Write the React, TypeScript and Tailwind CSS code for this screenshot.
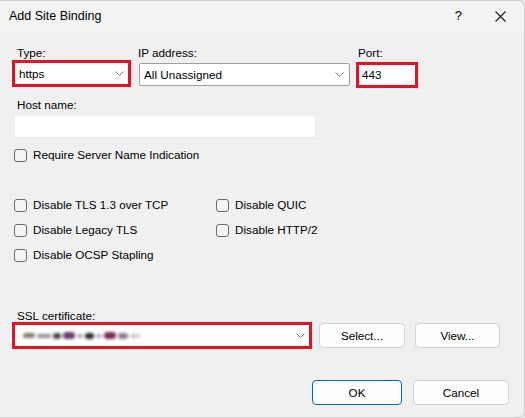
import React from "react";

const font = { fontFamily: '"Liberation Sans", Arial, sans-serif' };

function Chevron() {
  return (
    <svg width="9" height="5" viewBox="0 0 9 5" className="shrink-0">
      <path d="M0.5 0.5 L4.5 4.5 L8.5 0.5" fill="none" stroke="#6a6a6a" strokeWidth="0.9" />
    </svg>
  );
}

function Check({ label }: { label: string }) {
  return (
    <div className="flex h-[16px] items-center">
      <div className="h-[13px] w-[13px] shrink-0 rounded-[3px] border border-[#6b6b6b] bg-[#f5f5f5]" />
      <span className="ml-[6px] whitespace-nowrap leading-[16px]">{label}</span>
    </div>
  );
}

function Btn({ label, w, primary }: { label: string; w: string; primary?: boolean }) {
  return (
    <div
      className={`flex h-[25px] items-center justify-center rounded-[4px] bg-[#fdfdfd] ${w} ${
        primary ? "border border-[#0067c0]" : "border border-[#d3d3d3]"
      }`}
    >
      {label}
    </div>
  );
}

export default function App() {
  return (
    <div className="h-[418px] w-[525px] overflow-hidden bg-[#e4e4e4]" style={font}>
      <div className="h-[418px] w-[525px] overflow-hidden rounded-tr-[8px] rounded-br-[8px] border-t border-r border-b border-[#cfcfcf] bg-[#f0f0f0] text-[11.7px] text-black">
        {/* Title bar */}
        <div className="flex h-[30px] items-center bg-[#f3f3f3]">
          <span className="ml-[9px] text-[12.5px] leading-[16px]">Add Site Binding</span>
          <div className="flex-1" />
          <span className="mr-[33px] text-[13px]">?</span>
          <svg width="11" height="11" viewBox="0 0 11 11" className="mr-[18px]">
            <path d="M0.5 0.5 L10.5 10.5 M10.5 0.5 L0.5 10.5" stroke="#1a1a1a" strokeWidth="1.1" />
          </svg>
        </div>

        {/* Row 1 */}
        <div className="ml-[12px] mt-[14px] flex items-start">
          <div className="flex w-[119px] flex-col">
            <span className="ml-[5px] h-[15px] leading-[15px]">Type:</span>
            <div className="flex h-[27px] items-center border-[3px] border-[#e81123] bg-white pl-[4px] pr-[4px]">
              <span className="flex-1">https</span>
              <Chevron />
            </div>
          </div>
          <div className="ml-[8px] flex w-[211px] flex-col">
            <span className="ml-[-1px] h-[15px] leading-[15px]">IP address:</span>
            <div className="mt-[3px] flex h-[23px] items-center rounded-[2px] border border-[#a0a0a0] bg-white pl-[4px] pr-[5px]">
              <span className="flex-1">All Unassigned</span>
              <Chevron />
            </div>
          </div>
          <div className="ml-[6px] flex w-[62px] flex-col">
            <span className="ml-[2px] h-[15px] leading-[15px]">Port:</span>
            <div className="mt-[2px] flex h-[26px] items-center border-[3px] border-[#e81123] bg-white pl-[3px]">
              443
            </div>
          </div>
        </div>

        {/* Host name */}
        <div className="ml-[17px] mt-[9px] h-[16px] leading-[16px]">Host name:</div>
        <div className="ml-[15px] mt-[3px] h-[22px] w-[300px] border-b border-[#e6e6e6] bg-white" />

        {/* SNI */}
        <div className="ml-[14px] mt-[9px]">
          <Check label="Require Server Name Indication" />
        </div>

        {/* Options grid */}
        <div className="ml-[14px] mt-[34px] grid w-[320px] grid-cols-[202px_1fr] gap-y-[9px]">
          <Check label="Disable TLS 1.3 over TCP" />
          <Check label="Disable QUIC" />
          <Check label="Disable Legacy TLS" />
          <Check label="Disable HTTP/2" />
          <Check label="Disable OCSP Stapling" />
        </div>

        {/* SSL certificate */}
        <div className="ml-[17px] mt-[45px] h-[16px] leading-[16px]">SSL certificate:</div>
        <div className="ml-[12px] -mt-[2px] flex items-center">
          <div className="flex h-[27px] w-[300px] items-center border-[3px] border-[#e81123] bg-white pl-[8px] pr-[4px]">
            <div className="flex flex-1 items-center gap-[2px] blur-[1.6px]">
              <div className="h-[5px] w-[12px] rounded-full bg-[#8a7a70]" />
              <div className="h-[4px] w-[14px] rounded-full bg-[#8c8c9c]" />
              <div className="h-[6px] w-[8px] rounded-full bg-[#444]" />
              <div className="h-[7px] w-[12px] rounded-full bg-[#6a3a6a]" />
              <div className="h-[4px] w-[6px] rounded-full bg-[#a8a8a8]" />
              <div className="h-[6px] w-[9px] rounded-full bg-[#2a2a2a]" />
              <div className="h-[4px] w-[6px] rounded-full bg-[#b8a8b8]" />
              <div className="h-[7px] w-[12px] rounded-full bg-[#7a2a50]" />
              <div className="h-[6px] w-[10px] rounded-full bg-[#8a7a98]" />
              <div className="h-[4px] w-[10px] rounded-full bg-[#c8c8d0]" />
            </div>
            <Chevron />
          </div>
          <div className="ml-[7px]">
            <Btn label="Select..." w="w-[86px]" />
          </div>
          <div className="ml-[10px]">
            <Btn label="View..." w="w-[85px]" />
          </div>
        </div>

        {/* Bottom buttons */}
        <div className="ml-[312px] mt-[31px] flex">
          <Btn label="OK" w="w-[90px]" primary />
          <div className="ml-[11px]">
            <Btn label="Cancel" w="w-[96px]" />
          </div>
        </div>
      </div>
    </div>
  );
}
